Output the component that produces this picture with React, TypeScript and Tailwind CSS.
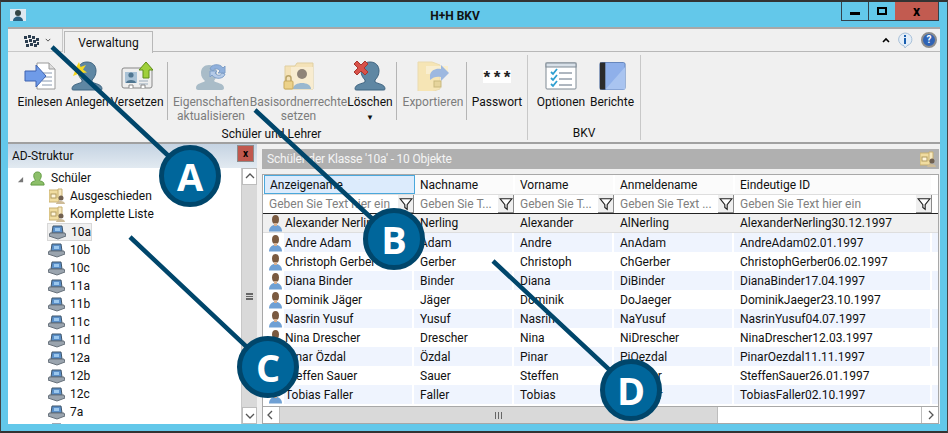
import type { ReactNode } from "react";

const students = [
  ["Alexander Nerling", "Nerling", "Alexander", "AlNerling", "AlexanderNerling30.12.1997"],
  ["Andre Adam", "Adam", "Andre", "AnAdam", "AndreAdam02.01.1997"],
  ["Christoph Gerber", "Gerber", "Christoph", "ChGerber", "ChristophGerber06.02.1997"],
  ["Diana Binder", "Binder", "Diana", "DiBinder", "DianaBinder17.04.1997"],
  ["Dominik Jäger", "Jäger", "Dominik", "DoJaeger", "DominikJaeger23.10.1997"],
  ["Nasrin Yusuf", "Yusuf", "Nasrin", "NaYusuf", "NasrinYusuf04.07.1997"],
  ["Nina Drescher", "Drescher", "Nina", "NiDrescher", "NinaDrescher12.03.1997"],
  ["Pinar Özdal", "Özdal", "Pinar", "PiOezdal", "PinarOezdal11.11.1997"],
  ["Steffen Sauer", "Sauer", "Steffen", "StSauer", "SteffenSauer26.01.1997"],
  ["Tobias Faller", "Faller", "Tobias", "ToFaller", "TobiasFaller02.10.1997"],
];

const classes = ["10a", "10b", "10c", "11a", "11b", "11c", "11d", "12a", "12b", "12c", "7a"];

function Bust({ color = "#5f87a3", dark = "#3f6480" }: { color?: string; dark?: string }) {
  return (
    <svg viewBox="0 0 32 30" className="w-8 h-[30px]">
      <path
        d="M16 1c6 0 9 4 9 9 0 4-2 7-4 9v2c3 2 10 2 10 7 0 1-1 1-2 1H3c-1 0-2 0-2-1 0-5 7-5 10-7v-2c-2-2-4-5-4-9 0-5 3-9 9-9z"
        fill={color}
        stroke={dark}
      />
    </svg>
  );
}

function ImportIcon() {
  return (
    <svg viewBox="0 0 32 30" className="w-8 h-[30px]">
      <path d="M13 2h12l6 6v20H13z" fill="#fff" stroke="#9a9a9a" />
      <path d="M25 2v6h6" fill="#ddd" stroke="#9a9a9a" />
      <path d="M18 12h10M18 16h10M18 20h10M18 24h10" stroke="#8a9ab0" />
      <path d="M1 10h11V4l10 11-10 11v-6H1z" fill="#6f9be8" stroke="#3f63b0" />
    </svg>
  );
}

function MoveIcon() {
  return (
    <svg viewBox="0 0 32 30" className="w-8 h-[30px]">
      <rect x="1" y="7" width="30" height="20" rx="2" fill="#eee" stroke="#888" />
      <rect x="4" y="11" width="12" height="11" fill="#a9c2d6" />
      <circle cx="10" cy="14" r="2.6" fill="#4f7590" />
      <path d="M5 22c0-4 10-4 10 0z" fill="#4f7590" />
      <path d="M18 20h9M18 23h9" stroke="#9ab" />
      <path d="M8 27v-3h4v3M20 27v-3h4v3" fill="#fff" stroke="#888" />
      <path d="M25 1l7 8h-4v8h-6V9h-4z" fill="#9fd03a" stroke="#5f8f18" />
    </svg>
  );
}

function RefreshPerson() {
  return (
    <svg viewBox="0 0 32 30" className="w-8 h-[30px]">
      <path
        d="M14 4c6 0 8 4 8 9 0 3-2 5-3 7 2 2 10 2 10 7 0 1-1 2-2 2H3c-1 0-2-1-2-2 0-5 7-5 9-7-2-2-4-4-4-8 0-5 3-8 8-8z"
        fill="#a9bcc8"
      />
      <path d="M15 8c1-5 10-6 13-1l2-2v7h-7l2-2c-2-3-6-3-7 0z" fill="#8fb0dc" stroke="#7f9fc8" />
      <path d="M30 13c-1 5-10 6-13 1l-2 2V10h7l-2 2c2 3 6 3 7 0z" fill="#b5cbe8" stroke="#7f9fc8" />
    </svg>
  );
}

function FolderPerson() {
  return (
    <svg viewBox="0 0 32 30" className="w-8 h-[30px]">
      <path d="M2 5h10l2-3h16v26H2z" fill="#f4e2b8" stroke="#e0cfa0" />
      <rect x="8" y="6" width="22" height="22" fill="#f8ecd0" />
      <circle cx="19" cy="13" r="5" fill="#8f8478" />
      <path d="M10 28c0-8 18-8 18 0z" fill="#9ab8cf" />
      <rect x="1" y="20" width="9" height="8" rx="1" fill="#ecd28a" stroke="#c7a95c" />
      <path d="M3 20v-3c0-3 5-3 5 0v3" fill="none" stroke="#bba468" strokeWidth="1.5" />
    </svg>
  );
}

function ExportFolder() {
  return (
    <svg viewBox="0 0 32 30" className="w-8 h-[30px]">
      <path d="M1 1h14l8 3v24l-9 3H1z" fill="#f6e5b5" stroke="#eadbb0" />
      <path d="M9 5h22v8H9z" fill="#f9eed0" />
      <path d="M13 14c1-5 6-7 11-6V4l8 8-8 8v-4c-4-1-8 0-11 3z" fill="#9db8e0" />
      <rect x="17" y="20" width="7" height="6" fill="#e6d49c" stroke="#c9b97f" />
    </svg>
  );
}

function OptionsIcon() {
  return (
    <svg viewBox="0 0 32 30" className="w-8 h-[30px]">
      <rect x="1" y="2" width="30" height="26" rx="1" fill="#fff" stroke="#7f8a94" />
      <rect x="1" y="2" width="30" height="4" fill="#d8e0e8" stroke="#7f8a94" />
      <path d="M14 12h13M14 18h13M14 24h13" stroke="#5f6f80" />
      <path d="M6 11l2 2 4-5M6 17l2 2 4-5M6 23l2 2 4-5" fill="none" stroke="#2f9fd0" strokeWidth="1.8" />
    </svg>
  );
}

function BookIcon() {
  return (
    <svg viewBox="0 0 30 32" className="w-[27px] h-[30px]">
      <rect x="1" y="1" width="28" height="30" rx="2" fill="#8fb0ea" stroke="#5c7fb8" />
      <path d="M7 31L29 6v25z" fill="#a9c4f0" />
      <rect x="1" y="1" width="6" height="30" fill="#2b2b2b" />
    </svg>
  );
}

function PasswordIcon() {
  return (
    <div className="w-8 h-[30px] flex items-center justify-center">
      <div className="w-[28px] h-[13px] bg-white flex items-center justify-center text-[17px] font-bold leading-none pt-[5px] text-[#222] [font-family:'Liberation_Mono',monospace]">
        ***
      </div>
    </div>
  );
}

function Star() {
  return (
    <svg viewBox="0 0 16 16" className="absolute left-0 top-[1px] w-4 h-4">
      <path d="M8 0l1.6 5L15 3l-3 4.500 4 3-5 .5-1 5-3-4-5 2 2-5L0 5l5 .5z" fill="#f5d820" />
    </svg>
  );
}

function RedCross() {
  return (
    <svg viewBox="0 0 18 18" className="absolute -left-[2px] -top-[2px] w-[18px] h-[18px]">
      <path d="M2 5l3-3 4 4 4-4 3 3-4 4 4 4-3 3-4-4-4 4-3-3 4-4z" fill="#d8524a" stroke="#a8362f" />
    </svg>
  );
}

function RibbonButton({
  icon,
  label,
  second,
  disabled,
  className,
}: {
  icon: ReactNode;
  label: string;
  second?: ReactNode;
  disabled?: boolean;
  className: string;
}) {
  return (
    <div className={`flex flex-col items-center shrink-0 ${className} ${disabled ? "text-[#7c7c7c]" : "text-[#101010]"}`}>
      <div className="relative h-[30px] mt-[8px]">{icon}</div>
      <div className="mt-[4px] text-center leading-[14px] whitespace-nowrap">{label}</div>
      {second && <div className="text-center leading-[14px] whitespace-nowrap">{second}</div>}
    </div>
  );
}

function Sep({ className }: { className: string }) {
  return <div className={`w-px h-[58px] mt-[9px] bg-[#b5b5b5] shrink-0 ${className}`} />;
}

function Ribbon() {
  return (
    <div className="h-[115px] shrink-0 border-b-2 border-[#a0a0a0]">
      <div className="h-[24px] flex relative">
        <div className="w-[55px] h-[23px] flex items-center pl-[15px] gap-[6px] border-r border-b border-[#c8c8c8]">
          <svg viewBox="0 0 16 13" className="w-[16px] h-[13px]">
            {[
              [1, 2], [5, 1], [9, 2], [13, 4], [2, 6], [6, 5], [10, 6], [14, 8], [3, 10], [7, 9], [11, 10],
            ].map(([x, y]) => (
              <rect key={`${x}-${y}`} x={x} y={y} width="3" height="3" fill="#2c3e50" />
            ))}
          </svg>
          <svg viewBox="0 0 8 5" className="w-[6px] h-[4px]">
            <path d="M1 1l3 3 3-3" fill="none" stroke="#222" />
          </svg>
        </div>
        <div className="ml-[1px] mt-[2px] w-[89px] h-[22px] bg-[#f0f0f0] border border-b-0 border-[#b8b8b8] flex items-center justify-center text-[#101010] z-10">
          Verwaltung
        </div>
        <div className="flex-1 border-b border-[#b8b8b8] h-[23px] flex items-center justify-end pr-[3px]">
          <svg viewBox="0 0 8 6" className="w-[8px] h-[6px] mr-[7px]">
            <path d="M1 5l3-3 3 3" fill="none" stroke="#000" strokeWidth="1.600" />
          </svg>
          <svg viewBox="0 0 16 17" className="w-4 h-[17px] mr-[8px]">
            <path d="M8 1a7 6.500 0 0 1 2 12.700L8 16l-1-2.200A7 6.500 0 0 1 8 1z" fill="#e4eef8" stroke="#a8c0d8" />
            <rect x="7" y="3" width="2" height="2" fill="#1a5fb0" />
            <rect x="7" y="6" width="2" height="6" fill="#1a5fb0" />
          </svg>
          <div className="w-4 h-4 rounded-full bg-[#2f63b5] border-2 border-[#8d8d8d] text-white text-[10px] font-bold flex items-center justify-center leading-none">
            ?
          </div>
        </div>
      </div>

      <div className="flex h-[89px] pl-[8px]">
        <div className="w-[512px] flex flex-col border-r border-[#c8c8c8] mt-[2px] h-[85px] shrink-0">
          <div className="flex h-[69px] -mt-[2px]">
            <RibbonButton className="w-[48px]" label="Einlesen" icon={<ImportIcon />} />
            <RibbonButton
              className="w-[46px]"
              label="Anlegen"
              icon={
                <>
                  <Bust />
                  <Star />
                </>
              }
            />
            <RibbonButton className="w-[54px]" label="Versetzen" icon={<MoveIcon />} />
            <Sep className="ml-[3px]" />
            <RibbonButton className="w-[78px] ml-[4px]" disabled label="Eigenschaften" second="aktualisieren" icon={<RefreshPerson />} />
            <RibbonButton className="w-[97px]" disabled label="Basisordnerrechte" second="setzen" icon={<FolderPerson />} />
            <RibbonButton
              className="w-[46px]"
              label="Löschen"
              second={<span className="text-[8px] leading-none">▼</span>}
              icon={
                <>
                  <Bust />
                  <RedCross />
                </>
              }
            />
            <Sep className="ml-[3px]" />
            <RibbonButton className="w-[66px] ml-[3px]" disabled label="Exportieren" icon={<ExportFolder />} />
            <Sep className="" />
            <RibbonButton className="w-[56px] ml-[2px]" label="Passwort" icon={<PasswordIcon />} />
          </div>
          <div className="mt-[5px] text-center text-[#101010] leading-[14px]">Schüler und Lehrer</div>
        </div>
        <div className="w-[113px] flex flex-col border-r border-[#c8c8c8] mt-[2px] h-[85px] shrink-0">
          <div className="flex h-[69px] -mt-[2px] pl-[5px]">
            <RibbonButton className="w-[56px]" label="Optionen" icon={<OptionsIcon />} />
            <RibbonButton className="w-[46px]" label="Berichte" icon={<BookIcon />} />
          </div>
          <div className="mt-[5px] text-center text-[#101010] leading-[14px]">BKV</div>
        </div>
      </div>
    </div>
  );
}

function Chevron({ dir }: { dir: "up" | "down" | "left" | "right" }) {
  const d = {
    up: "M2 7l4-4 4 4",
    down: "M2 4l4 4 4-4",
    left: "M7 2L3 6l4 4",
    right: "M5 2l4 4-4 4",
  }[dir];
  return (
    <svg viewBox="0 0 12 12" className="w-3 h-3">
      <path d={d} fill="none" stroke="#555" strokeWidth="1.300" />
    </svg>
  );
}

function SpecialFolder() {
  return (
    <svg viewBox="0 0 16 16" className="w-4 h-4 shrink-0">
      <path d="M0 2h10v12H0z" fill="#f0dca0" stroke="#c8b070" />
      <path d="M9 1h4v9H9z" fill="#f6e8c0" stroke="#c8b070" />
      <rect x="2" y="6" width="5" height="4" fill="#fff6dc" stroke="#b09a60" />
      <circle cx="12" cy="10" r="2.500" fill="#706050" />
      <path d="M7 16c0-4 9-4 9 0z" fill="#cdbb98" />
    </svg>
  );
}

function ClassIcon() {
  return (
    <svg viewBox="0 0 17 16" className="w-[17px] h-4 shrink-0">
      <path d="M4 2h9l1 7H3z" fill="#5a8fc8" stroke="#40566a" />
      <path d="M1 9h15l1 3-8 3-9-3z" fill="#9aa4ae" stroke="#66707a" />
      <path d="M6 4h5v3H6z" fill="#9cc8ee" />
    </svg>
  );
}

function Tree() {
  return (
    <div className="w-[249px] shrink-0 flex flex-col bg-white">
      <div className="h-[24px] shrink-0 flex items-center justify-between pl-[4px] pr-[3px] bg-gradient-to-b from-[#c5d3e2] to-[#e2eaf1] text-[#101010]">
        <span>AD-Struktur</span>
        <div className="w-[17px] h-[17px] bg-[#c0584e] border border-[#8c8c8c] flex items-center justify-center text-[10px] font-bold leading-none -mt-[5px] text-black">
          x
        </div>
      </div>
      <div className="flex-1 flex min-h-0">
        <div className="flex-1 overflow-hidden pt-[1px] text-[#101010]">
          <div className="h-[18px] flex items-center pl-[9px]">
            <svg viewBox="0 0 8 8" className="w-[7px] h-[7px] mr-[6px] mt-[2px]">
              <path d="M7 1v6H1z" fill="#777" />
            </svg>
            <svg viewBox="0 0 16 16" className="w-[15px] h-[15px] mr-[6px]">
              <path d="M8 1c3 0 4 2 4 4s-1 4-2 5c1 1 5 1 5 4v1H1v-1c0-3 4-3 5-4-1-1-2-3-2-5s1-4 4-4z" fill="#8dbf6a" stroke="#5f9a40" />
            </svg>
            <span>Schüler</span>
          </div>
          {["Ausgeschieden", "Komplette Liste"].map((name) => (
            <div key={name} className="h-[18px] flex items-center pl-[41px] gap-[5px]">
              <SpecialFolder />
              <span>{name}</span>
            </div>
          ))}
          {classes.map((name) => (
            <div key={name} className="h-[18px] flex items-center pl-[39px]">
              <div className={`flex items-center gap-[5px] h-[18px] pl-[1px] ${name === "10a" ? "w-[45px] bg-[#f0f0f0] border border-[#d8d8d8]" : ""}`}>
                <ClassIcon />
                <span>{name}</span>
              </div>
            </div>
          ))}
          <div className="h-[18px] flex items-center pl-[40px]">
            <ClassIcon />
          </div>
        </div>
        <div className="w-[16px] shrink-0 flex flex-col bg-[#d9d9d9] border-l border-[#c8c8c8]">
          <div className="h-[17px] bg-white border border-[#bdbdbd] flex items-center justify-center">
            <Chevron dir="up" />
          </div>
          <div className="flex-1 flex items-center justify-center">
            <div className="w-[7px] h-[7px] border-y-2 border-[#666] relative">
              <div className="h-px mt-[1.500px] bg-[#666]" />
            </div>
          </div>
          <div className="h-[17px] bg-white border border-[#bdbdbd] flex items-center justify-center">
            <Chevron dir="down" />
          </div>
        </div>
      </div>
    </div>
  );
}

const colWidths = ["w-[151px]", "w-[100px]", "w-[100px]", "w-[120px]", "w-[198px]"];
const headers = ["Anzeigename", "Nachname", "Vorname", "Anmeldename", "Eindeutige ID"];
const filters = ["Geben Sie Text hier ein", "Geben Sie T...", "Geben Sie T...", "Geben Sie Text ...", "Geben Sie Text hier ein"];

function Funnel() {
  return (
    <div className="w-[16px] h-[18px] mr-px shrink-0 bg-[#efefef] border-r border-b border-[#8a8a8a] flex items-center justify-center">
      <svg viewBox="0 0 12 12" className="w-[14px] h-[14px]">
        <path d="M1 1.500h10L7 6.500v4l-2-1.500V6.500z" fill="#fff" stroke="#222" />
      </svg>
    </div>
  );
}

function PersonSmall() {
  return (
    <svg viewBox="0 0 14 17" className="w-[14px] h-[17px]">
      <ellipse cx="6.500" cy="4.500" rx="3.500" ry="4.500" fill="#7a5a40" />
      <path d="M0 16.500c0-9 13-9 13 0z" fill="#6fa0d4" />
      <path d="M5 8h3v3H5z" fill="#d8b090" />
    </svg>
  );
}

function DataGrid() {
  return (
    <div className="flex-1 min-w-0 flex flex-col ml-[5px] mr-[1px] mt-[5px]">
      <div className="h-[20px] shrink-0 bg-[#b0b0b0] text-[#f4f4f4] flex items-center justify-between pl-[5px] pr-[3px]">
        <span className="tracking-[-0.2px]">Schüler der Klasse '10a' - 10 Objekte</span>
        <SpecialFolder />
      </div>
      <div className="mt-[5px] h-[252px] bg-white border border-[#a8a8a8] flex flex-col">
        <div className="flex h-[19px] shrink-0 pl-px">
          {headers.map((h, i) => (
            <div
              key={h}
              className={`${colWidths[i]} shrink-0 flex items-center pl-[5px] text-[#101010] ${
                i === 0 ? "bg-[#dcebfc] border border-[#4aa8dc]" : "bg-[#fbfbfb] border-r-2 border-white"
              }`}
            >
              {h}
            </div>
          ))}
        </div>
        <div className="flex h-[20px] shrink-0 pl-px border-y border-b-[#222] border-t-[#dedede]">
          {filters.map((f, i) => (
            <div key={i} className={`${colWidths[i]} shrink-0 flex items-center justify-between pl-[5px] text-[#808080]`}>
              <span className="whitespace-nowrap">{f}</span>
              <Funnel />
            </div>
          ))}
        </div>
        <div className="flex-1">
          {students.map((row, r) => (
            <div
              key={row[0]}
              className={`flex h-[19px] items-center ${r === 0 ? "bg-[#f0f0f0] border-b border-[#dedede]" : ""}`}
            >
              {row.map((cell, i) => (
                <div
                  key={i}
                  className={`${colWidths[i]} shrink-0 h-full flex items-center whitespace-nowrap text-[#101010] ${
                    i === 0 ? "" : "pl-[6px]"
                  } ${r % 2 === 1 && i > 0 ? "bg-[#eff4fe] border-r-2 border-white" : ""}`}
                >
                  {i === 0 ? (
                    <>
                      <div className="w-[21px] shrink-0 pl-[6px] pt-px">
                        <PersonSmall />
                      </div>
                      <div className={`flex-1 h-full flex items-center pl-px ${r % 2 === 1 ? "bg-[#eff4fe] border-r-2 border-white" : ""}`}>
                        {cell}
                      </div>
                    </>
                  ) : (
                    cell
                  )}
                </div>
              ))}
              {r % 2 === 1 && <div className="flex-1 h-full bg-[#eff4fe]" />}
            </div>
          ))}
        </div>
        <div className="h-[17px] shrink-0 flex bg-white border-t border-[#a8a8a8]">
          <div className="w-[17px] border-r border-[#bdbdbd] flex items-center justify-center">
            <Chevron dir="left" />
          </div>
          <div className="w-[438px] bg-[#d9d9d9] border-r border-[#bdbdbd] flex items-center justify-center">
            <div className="w-[7px] h-[7px] flex justify-between">
              <div className="w-px bg-[#666]" />
              <div className="w-px bg-[#666]" />
              <div className="w-px bg-[#666]" />
            </div>
          </div>
          <div className="flex-1" />
          <div className="w-[17px] border-l border-[#bdbdbd] flex items-center justify-center">
            <Chevron dir="right" />
          </div>
        </div>
      </div>
    </div>
  );
}

function Callout({ letter, className }: { letter: string; className: string }) {
  return (
    <div
      className={`absolute w-[62px] h-[62px] rounded-full bg-[#00669b] border-[5px] border-[#00466b] flex items-center justify-center text-white text-[38px] font-bold leading-none [font-family:'Open_Sans',sans-serif] ${className}`}
    >
      {letter}
    </div>
  );
}

export default function App() {
  return (
    <div className="relative w-[948px] h-[433px] overflow-hidden bg-[#63c8ea] border-t-2 border-b-2 border-x border-t-[#333] border-b-[#333] border-x-[#444] flex flex-col text-[12px] [font-family:Roboto,sans-serif]">
      <div className="h-[25px] shrink-0 flex items-center justify-between relative">
        <svg viewBox="0 0 16 12" className="ml-[9px] w-4 h-3">
          <rect width="16" height="12" fill="#dfe8f0" />
          <circle cx="8" cy="4" r="3" fill="#344" />
          <path d="M3 12c0-6 10-6 10 0z" fill="#2a6080" />
        </svg>
        <div className="absolute left-0 right-0 mt-[2px] text-center font-bold text-[#111] pr-[38px]">H+H BKV</div>
        <div className="flex h-[19px] self-start mr-[8px] border border-t-0 border-[#33424c]">
          <div className="w-[27px] flex items-center justify-center border-r border-[#33424c]">
            <div className="w-[10px] h-[3px] mt-[5px] bg-black" />
          </div>
          <div className="w-[26px] flex items-center justify-center">
            <div className="w-[10px] h-[8px] border-2 border-black" />
          </div>
          <div className="w-[43px] bg-[#c25b50] flex items-center justify-center font-bold text-[14px] leading-none text-black">x</div>
        </div>
      </div>
      <div className="mx-[7px] flex-1 min-h-0 bg-[#f0f0f0] flex flex-col border-t-2 border-[#a8a8a8] mb-[7px]">
        <Ribbon />
        <div className="flex-1 min-h-0 flex">
          <Tree />
          <DataGrid />
        </div>
      </div>

      {/* callout lines and markers */}
      <svg className="absolute -left-px -top-[2px] w-[948px] h-[433px] pointer-events-none" viewBox="0 0 948 433">
        <path d="M52 47L190 176M255 110L394 239M130 237L268 367M493 261L631 390" stroke="#00466b" strokeWidth="4.500" />
      </svg>
      <Callout letter="A" className="left-[158px] top-[143px]" />
      <Callout letter="B" className="left-[362px] top-[206px]" />
      <Callout letter="C" className="left-[236px] top-[334px]" />
      <Callout letter="D" className="left-[599px] top-[357px]" />
    </div>
  );
}
